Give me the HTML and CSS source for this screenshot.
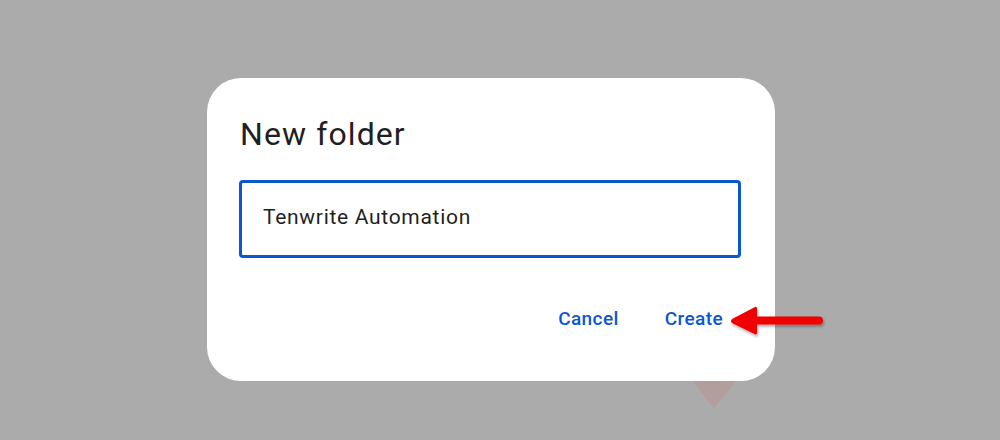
FILE: index.html
```html
<!DOCTYPE html>
<html>
<head>
<meta charset="utf-8">
<link rel="stylesheet" href="styles.css">
</head>
<body>
<div class="stage">
  <div class="pointer"></div>
  <div class="dialog">
    <h1 class="title">New folder</h1>
    <div class="field">Tenwrite Automation</div>
    <div class="actions">
      <span class="btn">Cancel</span>
      <span class="btn">Create</span>
    </div>
  </div>
  <svg class="arrow" width="104" height="40" viewBox="0 0 104 40">
    <defs>
      <filter id="sh" x="-20%" y="-40%" width="140%" height="180%">
        <feDropShadow dx="1" dy="2" stdDeviation="1.5" flood-color="#000" flood-opacity="0.35"/>
      </filter>
    </defs>
    <g filter="url(#sh)" fill="#f00000">
      <path d="M3 19 Q3 17.5 5 16.5 L27 5 Q29 4.3 29 6.5 L29 14.5 L91 14.5 Q95 14.5 95 18.5 Q95 22.5 91 22.5 L29 22.5 L29 31 Q29 33 27 32.3 L5 21.5 Q3 20.5 3 19 Z"/>
    </g>
  </svg>
</div>
</body>
</html>
```
FILE: styles.css
```css
html, body {
  margin: 0;
  padding: 0;
  background: #ababab;
}
body {
  width: 1000px;
  height: 440px;
  overflow: hidden;
  font-family: Roboto, "Noto Sans", Arial, sans-serif;
}
.stage {
  position: relative;
  width: 1000px;
  height: 440px;
  padding-top: 78px;
  padding-left: 207px;
  box-sizing: border-box;
}
.dialog {
  position: relative;
  width: 568px;
  height: 303px;
  box-sizing: border-box;
  background: #ffffff;
  border-radius: 34px;
  padding: 36px 34px 0 32px;
  display: flex;
  flex-direction: column;
}
.title {
  margin: 0 0 0 1px;
  font-size: 32px;
  line-height: 40px;
  font-weight: 400;
  color: #1f1f1f;
  letter-spacing: 1.1px;
}
.field {
  margin-top: 26px;
  height: 78px;
  box-sizing: border-box;
  border: 3px solid #0b57d0;
  border-radius: 4px;
  display: flex;
  align-items: center;
  padding: 0 0 4px 21px;
  font-size: 21px;
  color: #1f1f1f;
  letter-spacing: 0.7px;
}
.actions {
  margin-top: 49px;
  display: flex;
  justify-content: flex-end;
  gap: 46px;
  padding-right: 18px;
}
.btn {
  font-size: 19px;
  line-height: 24px;
  font-weight: 500;
  color: #0b57d0;
  letter-spacing: 0.4px;
}
.pointer {
  position: absolute;
  left: 683px;
  top: 370px;
  width: 0;
  height: 0;
  border-left: 31px solid transparent;
  border-right: 31px solid transparent;
  border-top: 38px solid #b39e9e;
}
.arrow {
  position: absolute;
  left: 728px;
  top: 302px;
}
```
